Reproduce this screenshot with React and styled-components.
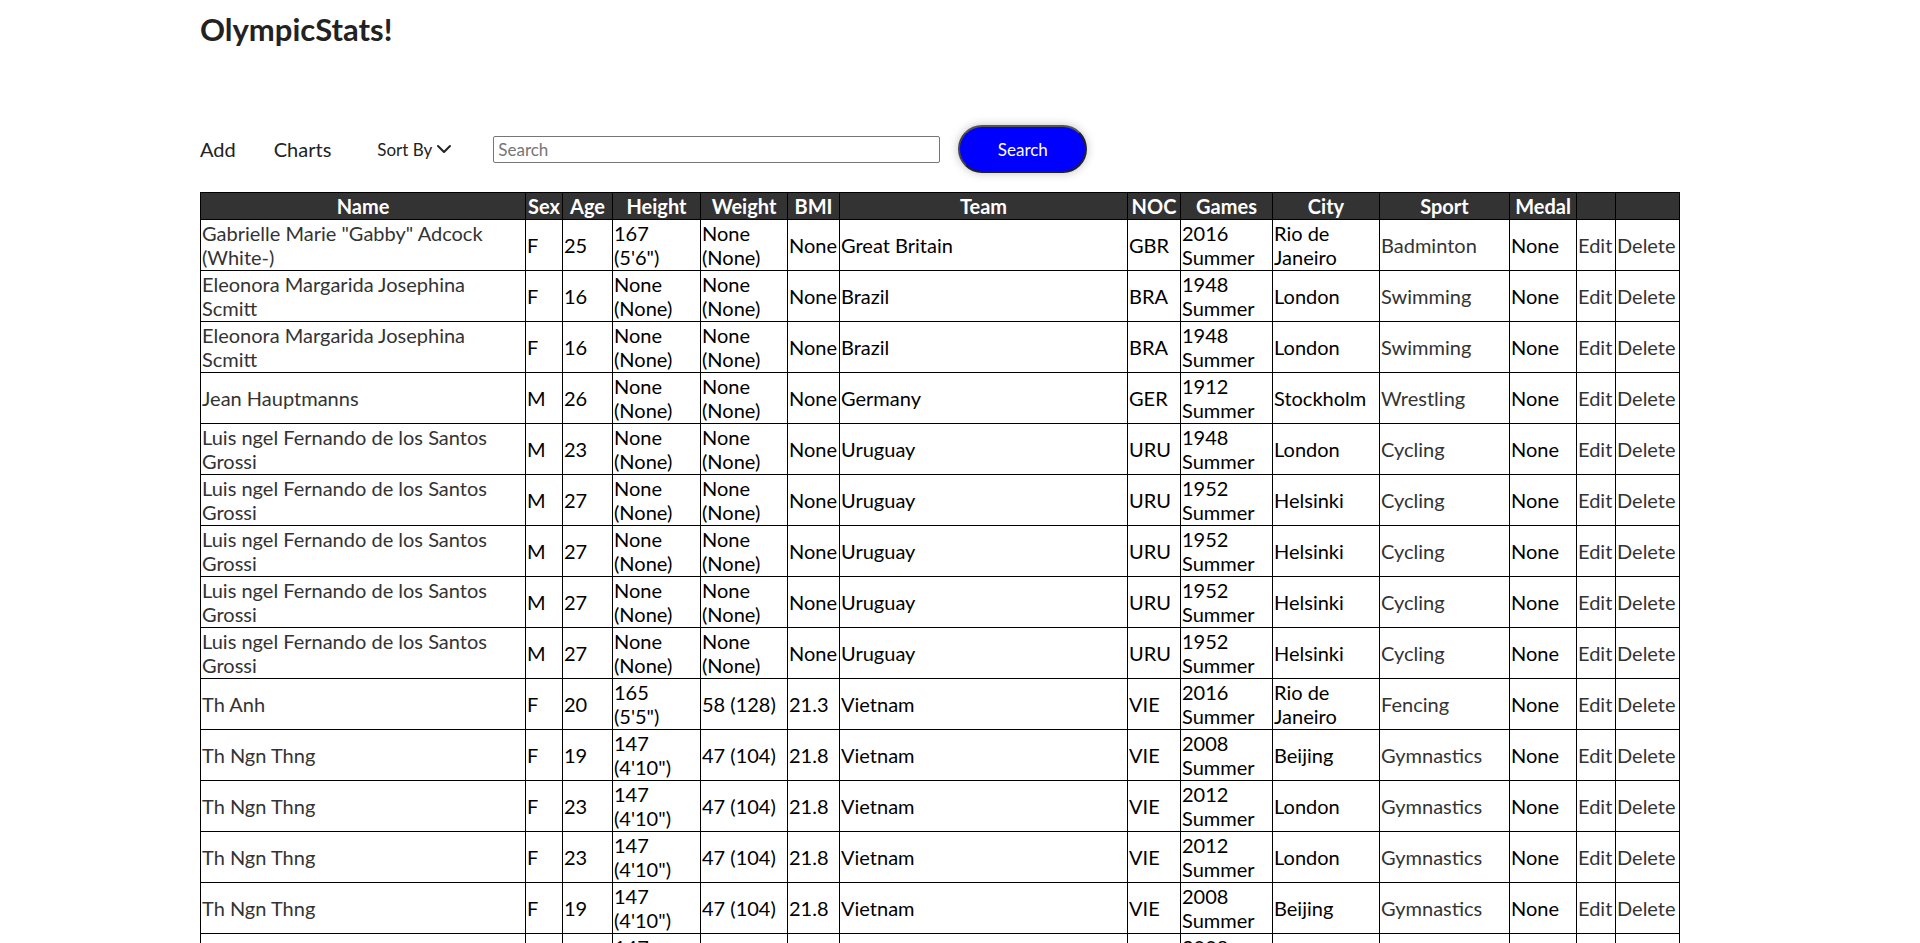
import React from 'react';
import styled, { createGlobalStyle } from 'styled-components';
import { ChevronDown } from 'lucide-react';

const GlobalStyle = createGlobalStyle`
  html::-webkit-scrollbar {
    width: 17px;
    background: #f1f1f1;
  }
  html::-webkit-scrollbar-thumb {
    background: #c1c1c1;
    border: 2px solid #f1f1f1;
  }
  body {
    margin: 0;
    font-family: Lato, "Open Sans", sans-serif;
    color: #000;
    background: #fff;
  }
`;

const Page = styled.div`
  padding: 0 200px;
`;

const Title = styled.h1`
  margin: 10px 0 0;
  font-size: 31px;
  line-height: 38px;
  font-weight: 700;
  color: #222;
`;

const Nav = styled.nav`
  display: flex;
  align-items: center;
  height: 50px;
  margin-top: 76px;
`;

const NavLink = styled.a`
  font-size: 20px;
  color: #222;
  text-decoration: none;
  cursor: pointer;
  margin-right: ${(props) => props.$gap}px;
`;

const SortButton = styled.button`
  display: flex;
  align-items: center;
  padding: 0;
  border: none;
  background: none;
  font-family: inherit;
  font-size: 17px;
  color: #222;
  cursor: pointer;
  margin-right: 37px;
`;

const SearchInput = styled.input`
  width: 447px;
  height: 27px;
  box-sizing: border-box;
  padding: 0 4px;
  border: 1px solid #767676;
  border-radius: 2px;
  font-family: inherit;
  font-size: 17px;
  margin-right: 18px;

  &::placeholder {
    color: #757575;
  }
`;

const SearchButton = styled.button`
  width: 129px;
  height: 48px;
  border-radius: 24px;
  border: 2px solid #222;
  border-top-color: #555;
  border-left-color: #444;
  background: #0000ff;
  color: #fff;
  font-family: inherit;
  font-size: 17px;
  box-shadow: 0 0 10px rgba(0, 0, 0, 0.25);
  cursor: pointer;
`;

const TableScroll = styled.div`
  width: max-content;
  height: 1950px;
  margin-top: 18px;
  overflow-y: scroll;
  overflow-x: hidden;

  &::-webkit-scrollbar {
    width: 18px;
    background: #f1f1f1;
  }
  &::-webkit-scrollbar-thumb {
    background: #c1c1c1;
    border: 2px solid #f1f1f1;
  }
`;

const Table = styled.table`
  table-layout: fixed;
  width: 1480px;
  border-collapse: collapse;
  font-size: 20px;
  line-height: 24px;
`;

const HeadCell = styled.th`
  box-sizing: border-box;
  background: #333;
  color: #fff;
  font-weight: 700;
  padding: 1px;
  border: 1px solid #000;
  text-align: center;
  width: ${(props) => props.$w}px;
`;

const Cell = styled.td`
  padding: 1px;
  border: 1px solid #000;
  vertical-align: middle;
  color: ${(props) => (props.$muted ? '#333' : '#000')};
  white-space: ${(props) => (props.$lines ? 'pre-line' : 'normal')};
`;

const columns = [
  { key: 'name', label: 'Name', w: 325, muted: true },
  { key: 'sex', label: 'Sex', w: 37 },
  { key: 'age', label: 'Age', w: 50 },
  { key: 'height', label: 'Height', w: 88 },
  { key: 'weight', label: 'Weight', w: 87 },
  { key: 'bmi', label: 'BMI', w: 52 },
  { key: 'team', label: 'Team', w: 288 },
  { key: 'noc', label: 'NOC', w: 53 },
  { key: 'games', label: 'Games', w: 92 },
  { key: 'city', label: 'City', w: 107 },
  { key: 'sport', label: 'Sport', w: 130, muted: true },
  { key: 'medal', label: 'Medal', w: 67 },
  { key: 'edit', label: '', w: 39, muted: true },
  { key: 'del', label: '', w: 64, muted: true },
];

const row = (name, sex, age, height, weight, bmi, team, noc, games, city, sport) => ({
  name, sex, age, height, weight, bmi, team, noc, games, city, sport,
  medal: 'None', edit: 'Edit', del: 'Delete',
});

const NN = 'None (None)';
const eleonora = 'Eleonora Margarida Josephina\nScmitt';
const luis = 'Luis ngel Fernando de los Santos Grossi';

const baseRows = [
  row('Gabrielle Marie "Gabby" Adcock (White-)', 'F', 25, '167 (5\'6")', NN, 'None', 'Great Britain', 'GBR', '2016 Summer', 'Rio de Janeiro', 'Badminton'),
  row(eleonora, 'F', 16, NN, NN, 'None', 'Brazil', 'BRA', '1948 Summer', 'London', 'Swimming'),
  row(eleonora, 'F', 16, NN, NN, 'None', 'Brazil', 'BRA', '1948 Summer', 'London', 'Swimming'),
  row('Jean Hauptmanns', 'M', 26, NN, NN, 'None', 'Germany', 'GER', '1912 Summer', 'Stockholm', 'Wrestling'),
  row(luis, 'M', 23, NN, NN, 'None', 'Uruguay', 'URU', '1948 Summer', 'London', 'Cycling'),
  row(luis, 'M', 27, NN, NN, 'None', 'Uruguay', 'URU', '1952 Summer', 'Helsinki', 'Cycling'),
  row(luis, 'M', 27, NN, NN, 'None', 'Uruguay', 'URU', '1952 Summer', 'Helsinki', 'Cycling'),
  row(luis, 'M', 27, NN, NN, 'None', 'Uruguay', 'URU', '1952 Summer', 'Helsinki', 'Cycling'),
  row(luis, 'M', 27, NN, NN, 'None', 'Uruguay', 'URU', '1952 Summer', 'Helsinki', 'Cycling'),
  row('Th Anh', 'F', 20, '165 (5\'5")', '58 (128)', '21.3', 'Vietnam', 'VIE', '2016 Summer', 'Rio de Janeiro', 'Fencing'),
  row('Th Ngn Thng', 'F', 19, '147 (4\'10")', '47 (104)', '21.8', 'Vietnam', 'VIE', '2008 Summer', 'Beijing', 'Gymnastics'),
  row('Th Ngn Thng', 'F', 23, '147 (4\'10")', '47 (104)', '21.8', 'Vietnam', 'VIE', '2012 Summer', 'London', 'Gymnastics'),
  row('Th Ngn Thng', 'F', 23, '147 (4\'10")', '47 (104)', '21.8', 'Vietnam', 'VIE', '2012 Summer', 'London', 'Gymnastics'),
  row('Th Ngn Thng', 'F', 19, '147 (4\'10")', '47 (104)', '21.8', 'Vietnam', 'VIE', '2008 Summer', 'Beijing', 'Gymnastics'),
  row('Th Ngn Thng', 'F', 19, '147 (4\'10")', '47 (104)', '21.8', 'Vietnam', 'VIE', '2008 Summer', 'Beijing', 'Gymnastics'),
];

// the real list is long, repeat the sample so the table scrolls
const athletes = Array.from({ length: 900 }, (_, i) => baseRows[i % baseRows.length]);

const App = () => (
  <Page>
    <GlobalStyle />
    <Title>OlympicStats!</Title>
    <Nav>
      <NavLink $gap={38}>Add</NavLink>
      <NavLink $gap={46}>Charts</NavLink>
      <SortButton>
        Sort By
        <ChevronDown size={24} strokeWidth={2} />
      </SortButton>
      <SearchInput placeholder="Search" />
      <SearchButton>Search</SearchButton>
    </Nav>
    <TableScroll>
      <Table>
        <thead>
          <tr>
            {columns.map((c) => (
              <HeadCell key={c.key} $w={c.w}>{c.label}</HeadCell>
            ))}
          </tr>
        </thead>
        <tbody>
          {athletes.map((a, i) => (
            <tr key={i}>
              {columns.map((c) => (
                <Cell key={c.key} $muted={c.muted} $lines={c.key === 'name'}>
                  {a[c.key]}
                </Cell>
              ))}
            </tr>
          ))}
        </tbody>
      </Table>
    </TableScroll>
  </Page>
);

export default App;
